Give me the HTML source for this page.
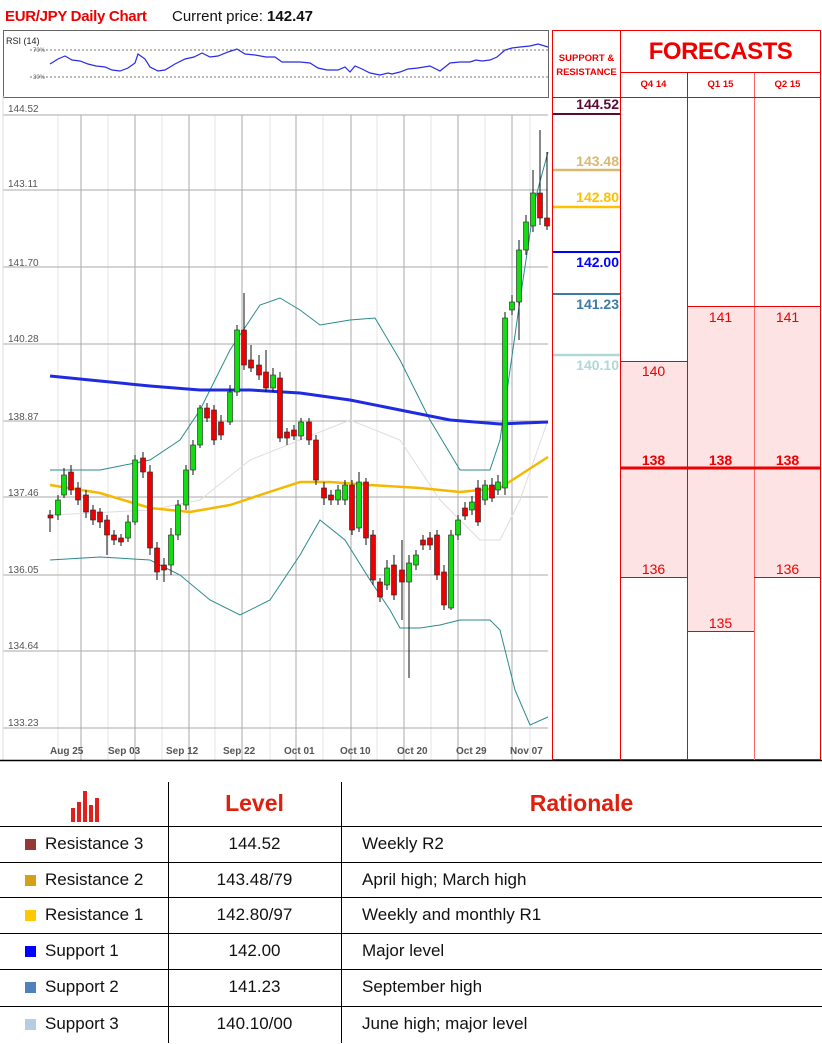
<!DOCTYPE html>
<html><head><meta charset="utf-8"><style>
body{margin:0;width:822px;height:1043px;background:#fff;font-family:"Liberation Sans",sans-serif;position:relative;overflow:hidden}
.a{position:absolute}
.lbl{position:absolute;left:8px;font-size:10px;color:#555}
.dl{position:absolute;top:746px;font-size:10px;color:#555;font-weight:bold}
.row{position:absolute;left:0;width:822px;height:35px;border-top:1px solid #000;font-size:17px;color:#111}
.row span{position:absolute;top:7px}
.sq{position:absolute;left:25px;top:12px;width:11px;height:11px}
.fc{position:absolute;font-size:14px;color:#e00;text-align:center;width:67px}
</style></head><body>
<div class="a" style="left:5px;top:8px;font-size:15px;color:#e00;font-weight:bold;letter-spacing:-0.3px">EUR/JPY Daily Chart</div>
<div class="a" style="left:172px;top:8px;font-size:15px;color:#111">Current price: <b>142.47</b></div>

<svg class="a" style="left:0;top:0" width="822" height="762">
<!-- RSI box -->
<rect x="3.5" y="30.5" width="545" height="67" fill="#fff" stroke="#666"/>
<line x1="30" y1="50" x2="548" y2="50" stroke="#777" stroke-dasharray="2,2"/>
<line x1="30" y1="77" x2="548" y2="77" stroke="#777" stroke-dasharray="2,2"/>
<text x="6" y="44" font-size="9" font-family="Liberation Sans" fill="#222">RSI (14)</text>
<text x="33" y="52" font-size="6" fill="#666">70%</text>
<text x="33" y="79" font-size="6" fill="#666">30%</text>
<polyline fill="none" stroke="#2a2ae8" stroke-width="1.2" points="50,64 58,59 65,56 72,60 80,61 88,64 96,66 105,67 112,70 120,71 128,68 135,63 138,54 145,59 150,67 158,71 165,70 175,64 185,59 194,57 202,53 210,57 218,56 228,52 237,49 245,54 255,55 266,57 275,57 282,62 300,62 310,63 318,68 327,70 338,70 345,67 350,72 355,66 362,69 370,73 380,75 388,73 392,74 400,72 408,69 418,68 430,66 440,71 450,63 460,62 470,62 476,60 482,61 490,60 497,57 505,50 512,48 520,47 530,46 538,44 548,47"/>
<!-- main chart grid -->
<g stroke="#e4e4e4" stroke-width="1">
<line x1="58" y1="115" x2="58" y2="760"/><line x1="108" y1="115" x2="108" y2="760"/><line x1="162" y1="115" x2="162" y2="760"/><line x1="215" y1="115" x2="215" y2="760"/><line x1="270" y1="115" x2="270" y2="760"/><line x1="323" y1="115" x2="323" y2="760"/><line x1="377" y1="115" x2="377" y2="760"/><line x1="431" y1="115" x2="431" y2="760"/><line x1="485" y1="115" x2="485" y2="760"/><line x1="530" y1="115" x2="530" y2="760"/>
</g>
<g stroke="#aaa" stroke-width="1">
<line x1="81" y1="115" x2="81" y2="760"/><line x1="135" y1="115" x2="135" y2="760"/><line x1="189" y1="115" x2="189" y2="760"/><line x1="242" y1="115" x2="242" y2="760"/><line x1="296" y1="115" x2="296" y2="760"/><line x1="351" y1="115" x2="351" y2="760"/><line x1="404" y1="115" x2="404" y2="760"/><line x1="458" y1="115" x2="458" y2="760"/><line x1="512" y1="115" x2="512" y2="760"/>
<line x1="3" y1="115" x2="548" y2="115"/><line x1="3" y1="190" x2="548" y2="190"/><line x1="3" y1="267" x2="548" y2="267"/><line x1="3" y1="344" x2="548" y2="344"/><line x1="3" y1="421" x2="548" y2="421"/><line x1="3" y1="497" x2="548" y2="497"/><line x1="3" y1="575" x2="548" y2="575"/><line x1="3" y1="651" x2="548" y2="651"/><line x1="3" y1="728" x2="548" y2="728"/>
</g>
<line x1="3" y1="96" x2="3" y2="760" stroke="#ddd"/>
<!-- bollinger -->
<polyline fill="none" stroke="#ddd" stroke-width="1" points="50,515 150,510 200,500 250,460 300,440 350,420 400,440 440,500 480,540 500,540 520,500 548,420"/>
<polyline fill="none" stroke="#2a8a8a" stroke-width="1" points="50,470 100,470 150,460 180,440 200,410 230,350 260,305 280,298 300,310 320,325 350,320 375,318 400,360 430,420 460,470 490,470 500,440 520,300 535,200 548,152"/>
<polyline fill="none" stroke="#2a8a8a" stroke-width="1" points="50,560 100,557 150,560 180,575 210,600 240,615 270,600 300,555 320,520 345,540 370,580 390,610 400,628 420,628 440,625 460,620 490,620 500,630 515,690 530,725 548,717"/>
<!-- MAs -->
<polyline fill="none" stroke="#1f2be0" stroke-width="3" points="50,376 100,381 150,386 200,390 250,390 300,393 350,400 400,410 450,420 500,424 548,422"/>
<polyline fill="none" stroke="#f5b800" stroke-width="2.5" points="50,485 100,493 150,508 190,512 230,505 260,495 300,482 330,482 370,485 420,488 460,492 500,488 520,475 548,457"/>
<!-- wicks -->
<g stroke="#111" stroke-width="1">
<path d="M50 510V532M58 495V520M64 468V498M71 465V495M78 482V505M86 490V518M93 505V525M100 508V528M107 515V555M114 530V545M121 534V546M128 515V542M135 455V525M143 452V478M150 465V555M157 542V580M164 558V582M171 528V575M178 500V540M186 465V510M193 440V475M200 405V448M207 403V422M214 405V445M221 415V440M230 385V425M237 325V396M244 293V370M251 345V372M259 355V380M266 350V392M273 368V392M280 372V442M287 428V445M294 425V440M301 418V440M309 418V445M316 435V485M324 482V505M331 490V505M338 485V505M345 480V505M352 480V535M359 472V532M366 478V545M373 530V585M380 578V602M387 560V590M394 555V600M402 540V620M409 555V678M416 550V570M423 535V550M430 532V550M437 530V580M444 565V610M451 530V610M458 515V540M465 502V520M472 496V515M478 480V526M485 480V505M492 478V502M498 475V495M505 312V495M512 295V315M519 240V340M526 215V255M533 170V232M540 130V225M547 152V230"/>
</g>
<!-- bodies -->
<g stroke="#222" stroke-width="0.6">
<rect x="48" y="515" width="5" height="3" fill="#e00"/>
<rect x="55.5" y="500" width="5" height="15" fill="#1d1"/>
<rect x="61.5" y="475" width="5" height="20" fill="#1d1"/>
<rect x="68.5" y="472" width="5" height="18" fill="#e00"/>
<rect x="75.5" y="488" width="5" height="12" fill="#e00"/>
<rect x="83.5" y="495" width="5" height="17" fill="#e00"/>
<rect x="90.5" y="510" width="5" height="10" fill="#e00"/>
<rect x="97.5" y="512" width="5" height="10" fill="#e00"/>
<rect x="104.5" y="520" width="5" height="15" fill="#e00"/>
<rect x="111.5" y="535" width="5" height="5" fill="#e00"/>
<rect x="118.5" y="538" width="5" height="4" fill="#e00"/>
<rect x="125.5" y="522" width="5" height="16" fill="#1d1"/>
<rect x="132.5" y="460" width="5" height="62" fill="#1d1"/>
<rect x="140.5" y="458" width="5" height="14" fill="#e00"/>
<rect x="147.5" y="472" width="5" height="76" fill="#e00"/>
<rect x="154.5" y="548" width="5" height="24" fill="#e00"/>
<rect x="161.5" y="565" width="5" height="5" fill="#e00"/>
<rect x="168.5" y="535" width="5" height="30" fill="#1d1"/>
<rect x="175.5" y="505" width="5" height="30" fill="#1d1"/>
<rect x="183.5" y="470" width="5" height="35" fill="#1d1"/>
<rect x="190.5" y="445" width="5" height="25" fill="#1d1"/>
<rect x="197.5" y="408" width="5" height="37" fill="#1d1"/>
<rect x="204.5" y="408" width="5" height="10" fill="#e00"/>
<rect x="211.5" y="410" width="5" height="30" fill="#e00"/>
<rect x="218.5" y="422" width="5" height="13" fill="#e00"/>
<rect x="227.5" y="392" width="5" height="30" fill="#1d1"/>
<rect x="234.5" y="330" width="5" height="62" fill="#1d1"/>
<rect x="241.5" y="330" width="5" height="35" fill="#e00"/>
<rect x="248.5" y="360" width="5" height="8" fill="#e00"/>
<rect x="256.5" y="365" width="5" height="10" fill="#e00"/>
<rect x="263.5" y="372" width="5" height="16" fill="#e00"/>
<rect x="270.5" y="375" width="5" height="13" fill="#1d1"/>
<rect x="277.5" y="378" width="5" height="60" fill="#e00"/>
<rect x="284.5" y="432" width="5" height="6" fill="#e00"/>
<rect x="291.5" y="430" width="5" height="6" fill="#e00"/>
<rect x="298.5" y="422" width="5" height="14" fill="#1d1"/>
<rect x="306.5" y="422" width="5" height="18" fill="#e00"/>
<rect x="313.5" y="440" width="5" height="40" fill="#e00"/>
<rect x="321.5" y="488" width="5" height="10" fill="#e00"/>
<rect x="328.5" y="495" width="5" height="5" fill="#e00"/>
<rect x="335.5" y="490" width="5" height="10" fill="#1d1"/>
<rect x="342.5" y="485" width="5" height="15" fill="#1d1"/>
<rect x="349.5" y="485" width="5" height="45" fill="#e00"/>
<rect x="356.5" y="482" width="5" height="46" fill="#1d1"/>
<rect x="363.5" y="482" width="5" height="56" fill="#e00"/>
<rect x="370.5" y="535" width="5" height="45" fill="#e00"/>
<rect x="377.5" y="582" width="5" height="15" fill="#e00"/>
<rect x="384.5" y="568" width="5" height="17" fill="#1d1"/>
<rect x="391.5" y="565" width="5" height="30" fill="#e00"/>
<rect x="399.5" y="570" width="5" height="12" fill="#e00"/>
<rect x="406.5" y="563" width="5" height="19" fill="#1d1"/>
<rect x="413.5" y="555" width="5" height="10" fill="#1d1"/>
<rect x="420.5" y="540" width="5" height="5" fill="#e00"/>
<rect x="427.5" y="538" width="5" height="7" fill="#e00"/>
<rect x="434.5" y="535" width="5" height="40" fill="#e00"/>
<rect x="441.5" y="572" width="5" height="33" fill="#e00"/>
<rect x="448.5" y="535" width="5" height="73" fill="#1d1"/>
<rect x="455.5" y="520" width="5" height="15" fill="#1d1"/>
<rect x="462.5" y="508" width="5" height="8" fill="#e00"/>
<rect x="469.5" y="502" width="5" height="8" fill="#1d1"/>
<rect x="475.5" y="488" width="5" height="34" fill="#e00"/>
<rect x="482.5" y="485" width="5" height="15" fill="#1d1"/>
<rect x="489.5" y="485" width="5" height="13" fill="#e00"/>
<rect x="495.5" y="482" width="5" height="8" fill="#1d1"/>
<rect x="502.5" y="318" width="5" height="170" fill="#1d1"/>
<rect x="509.5" y="302" width="5" height="8" fill="#1d1"/>
<rect x="516.5" y="250" width="5" height="52" fill="#1d1"/>
<rect x="523.5" y="222" width="5" height="28" fill="#1d1"/>
<rect x="530.5" y="193" width="5" height="33" fill="#1d1"/>
<rect x="537.5" y="193" width="5" height="25" fill="#e00"/>
<rect x="544.5" y="218" width="5" height="8" fill="#e00"/>
</g>
<!-- bottom axis -->
<line x1="0" y1="760.5" x2="822" y2="760.5" stroke="#000" stroke-width="1.5"/>

<!-- right panel -->
<rect x="620" y="361" width="67" height="216" fill="#fde3e3"/>
<rect x="687" y="306" width="67" height="325" fill="#fde3e3"/>
<rect x="754" y="306" width="67" height="271" fill="#fde3e3"/>
<g stroke="#e00" stroke-width="1" fill="none">
<rect x="552.5" y="30.5" width="268" height="729"/>
<line x1="620.5" y1="30" x2="620.5" y2="760"/>
<line x1="687.5" y1="72" x2="687.5" y2="760"/>
<line x1="754.5" y1="72" x2="754.5" y2="760" stroke="#f66"/>
<line x1="620" y1="72.5" x2="821" y2="72.5"/>
<line x1="552" y1="97.5" x2="821" y2="97.5"/>
<line x1="620" y1="361.5" x2="687" y2="361.5"/>
<line x1="687" y1="306.5" x2="821" y2="306.5"/>
<line x1="620" y1="577.5" x2="687" y2="577.5"/>
<line x1="754" y1="577.5" x2="821" y2="577.5"/>
<line x1="687" y1="631.5" x2="754" y2="631.5"/>
</g>
<line x1="620" y1="468" x2="821" y2="468" stroke="#e00" stroke-width="3"/>
<line x1="553" y1="114" x2="620" y2="114" stroke="#5a0a32" stroke-width="2"/>
<line x1="553" y1="170" x2="620" y2="170" stroke="#d9b870" stroke-width="2.5"/>
<line x1="553" y1="207" x2="620" y2="207" stroke="#ffc000" stroke-width="2.5"/>
<line x1="553" y1="252" x2="620" y2="252" stroke="#00f" stroke-width="2"/>
<line x1="553" y1="294" x2="620" y2="294" stroke="#3a7ca5" stroke-width="2"/>
<line x1="553" y1="355" x2="620" y2="355" stroke="#b0d8d8" stroke-width="2.5"/>
</svg>

<div class="lbl" style="top:104px">144.52</div>
<div class="lbl" style="top:179px">143.11</div>
<div class="lbl" style="top:258px">141.70</div>
<div class="lbl" style="top:334px">140.28</div>
<div class="lbl" style="top:412px">138.87</div>
<div class="lbl" style="top:488px">137.46</div>
<div class="lbl" style="top:565px">136.05</div>
<div class="lbl" style="top:641px">134.64</div>
<div class="lbl" style="top:718px">133.23</div>
<div class="dl" style="left:50px">Aug 25</div>
<div class="dl" style="left:108px">Sep 03</div>
<div class="dl" style="left:166px">Sep 12</div>
<div class="dl" style="left:223px">Sep 22</div>
<div class="dl" style="left:284px">Oct 01</div>
<div class="dl" style="left:340px">Oct 10</div>
<div class="dl" style="left:397px">Oct 20</div>
<div class="dl" style="left:456px">Oct 29</div>
<div class="dl" style="left:510px">Nov 07</div>

<div class="a" style="left:553px;top:52px;width:67px;text-align:center;font-size:9.5px;line-height:14px;color:#e00;font-weight:bold">SUPPORT &amp;<br>RESISTANCE</div>
<div class="a" style="left:620px;top:38px;width:201px;text-align:center;font-size:24px;color:#e00;font-weight:bold;letter-spacing:-0.5px">FORECASTS</div>
<div class="a" style="left:620px;top:79px;width:67px;text-align:center;font-size:9.5px;color:#e00;font-weight:bold">Q4 14</div>
<div class="a" style="left:687px;top:79px;width:67px;text-align:center;font-size:9.5px;color:#e00;font-weight:bold">Q1 15</div>
<div class="a" style="left:754px;top:79px;width:67px;text-align:center;font-size:9.5px;color:#e00;font-weight:bold">Q2 15</div>
<div class="a" style="left:553px;top:96px;width:66px;text-align:right;font-size:14px;font-weight:bold;color:#5a0a32">144.52</div>
<div class="a" style="left:553px;top:153px;width:66px;text-align:right;font-size:14px;font-weight:bold;color:#d9b870">143.48</div>
<div class="a" style="left:553px;top:189px;width:66px;text-align:right;font-size:14px;font-weight:bold;color:#ffc000">142.80</div>
<div class="a" style="left:553px;top:254px;width:66px;text-align:right;font-size:14px;font-weight:bold;color:#00f">142.00</div>
<div class="a" style="left:553px;top:296px;width:66px;text-align:right;font-size:14px;font-weight:bold;color:#3a7ca5">141.23</div>
<div class="a" style="left:553px;top:357px;width:66px;text-align:right;font-size:14px;font-weight:bold;color:#b0d8d8">140.10</div>
<div class="fc" style="left:620px;top:363px">140</div>
<div class="fc" style="left:687px;top:309px">141</div>
<div class="fc" style="left:754px;top:309px">141</div>
<div class="fc" style="left:620px;top:452px;font-weight:bold">138</div>
<div class="fc" style="left:687px;top:452px;font-weight:bold">138</div>
<div class="fc" style="left:754px;top:452px;font-weight:bold">138</div>
<div class="fc" style="left:620px;top:561px">136</div>
<div class="fc" style="left:754px;top:561px">136</div>
<div class="fc" style="left:687px;top:615px">135</div>

<!-- table -->
<div class="a" style="left:168px;top:782px;width:1px;height:261px;background:#000"></div>
<div class="a" style="left:341px;top:782px;width:1px;height:261px;background:#000"></div>
<svg class="a" style="left:70px;top:790px" width="36" height="34"><g fill="#e0201a"><rect x="1" y="18" width="4" height="14"/><rect x="7" y="12" width="4" height="20"/><rect x="13" y="1" width="4" height="31"/><rect x="19" y="15" width="4" height="17"/><rect x="25" y="8" width="4" height="24"/></g></svg>
<div class="a" style="left:168px;top:790px;width:173px;text-align:center;font-size:23px;font-weight:bold;color:#e0200f">Level</div>
<div class="a" style="left:341px;top:790px;width:481px;text-align:center;font-size:23px;font-weight:bold;color:#e0200f">Rationale</div>
<div class="row" style="top:826px"><div class="sq" style="background:#953735"></div><span style="left:45px">Resistance 3</span><span style="left:168px;width:173px;text-align:center">144.52</span><span style="left:362px">Weekly R2</span></div>
<div class="row" style="top:862px"><div class="sq" style="background:#d4a017"></div><span style="left:45px">Resistance 2</span><span style="left:168px;width:173px;text-align:center">143.48/79</span><span style="left:362px">April high; March high</span></div>
<div class="row" style="top:897px"><div class="sq" style="background:#ffc800"></div><span style="left:45px">Resistance 1</span><span style="left:168px;width:173px;text-align:center">142.80/97</span><span style="left:362px">Weekly and monthly R1</span></div>
<div class="row" style="top:933px"><div class="sq" style="background:#00f"></div><span style="left:45px">Support 1</span><span style="left:168px;width:173px;text-align:center">142.00</span><span style="left:362px">Major level</span></div>
<div class="row" style="top:969px;height:37px"><div class="sq" style="background:#4f81bd"></div><span style="left:45px">Support 2</span><span style="left:168px;width:173px;text-align:center">141.23</span><span style="left:362px">September high</span></div>
<div class="row" style="top:1006px;height:37px"><div class="sq" style="background:#b8cce4"></div><span style="left:45px">Support 3</span><span style="left:168px;width:173px;text-align:center">140.10/00</span><span style="left:362px">June high; major level</span></div>
</body></html>
